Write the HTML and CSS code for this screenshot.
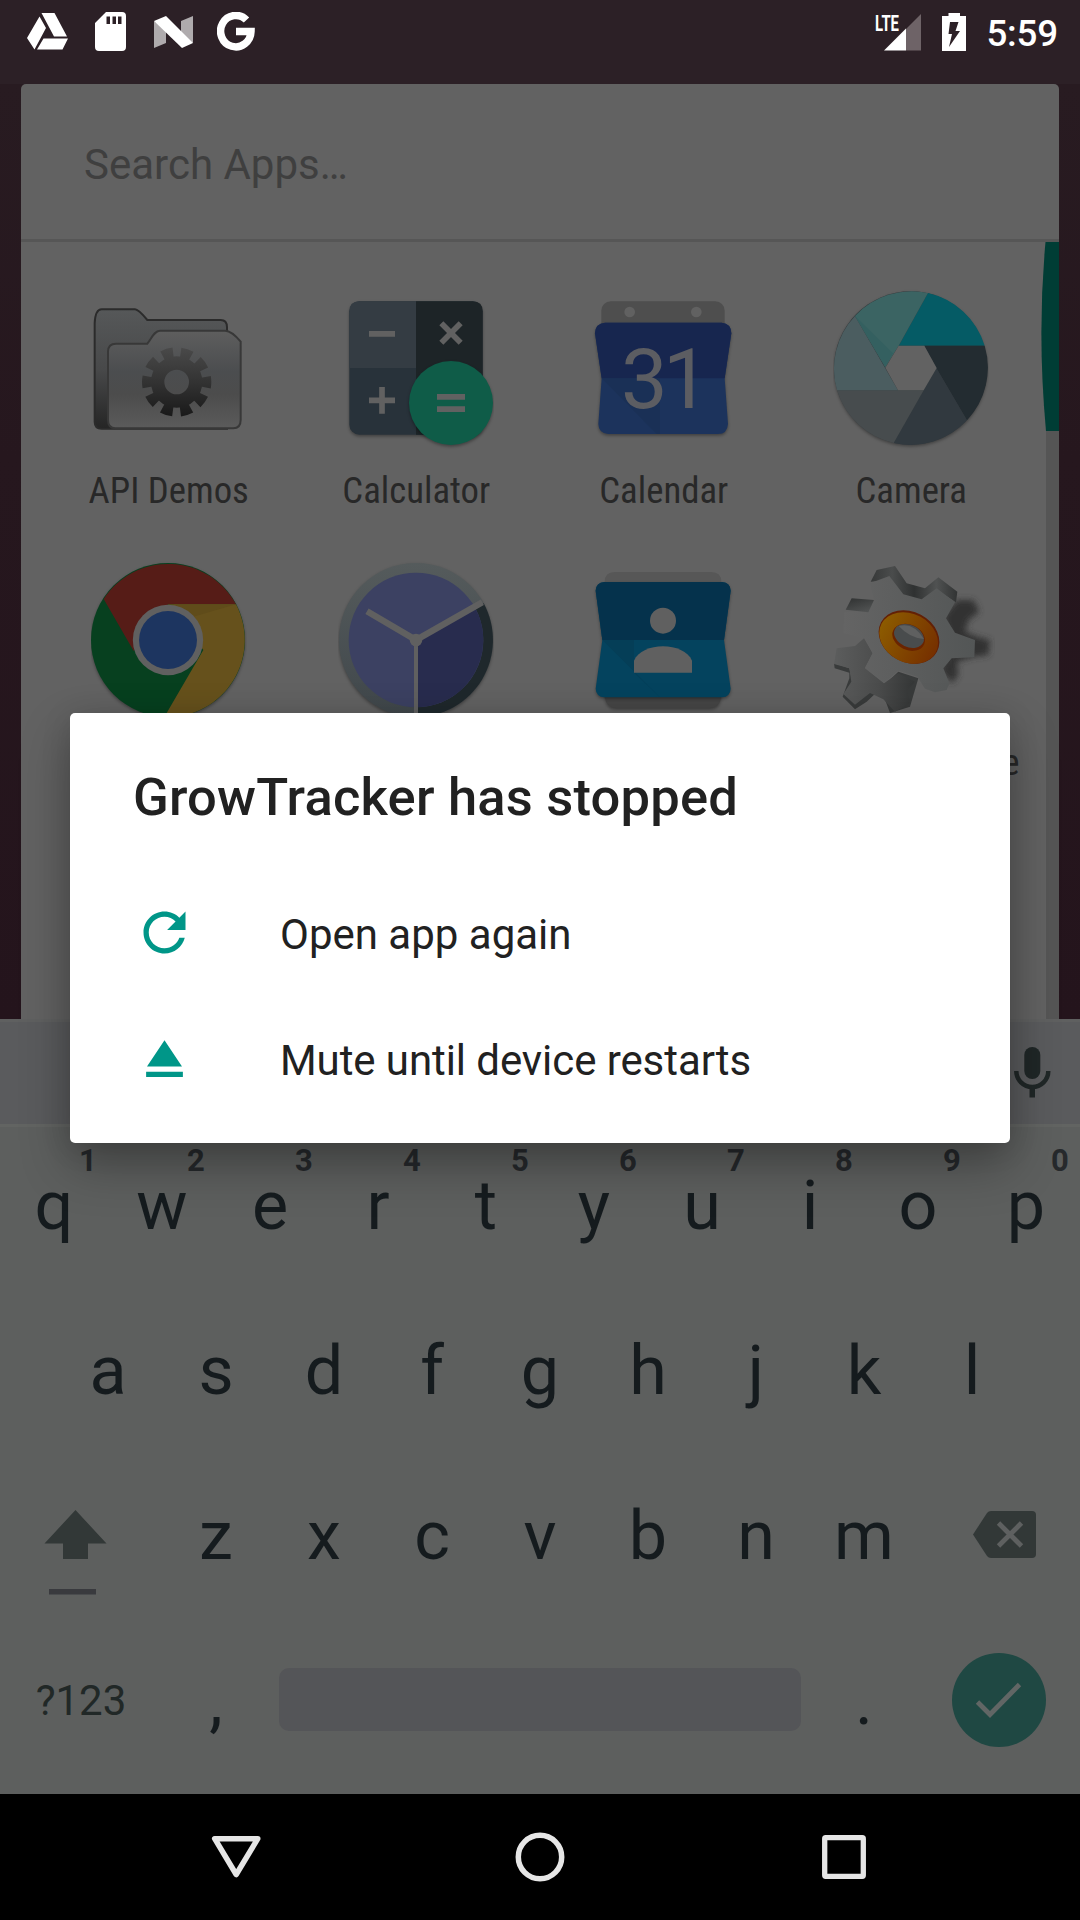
FILE: index.html
```
<!DOCTYPE html>
<html lang="en">
<head>
<meta charset="utf-8">
<title>GrowTracker has stopped</title>
<link rel="stylesheet" href="styles.css">
</head>
<body>
<div class="screen">
  <header class="status">
    <div class="status-left">
      <svg width="42" height="38" viewBox="0 0 42 38" fill="#fff"><path d="M14.500 0H27.500L40 23.500H27ZM12.500 3.500L19 15L7.500 36.500L0 25ZM16.500 25.500H41L35.500 36.500H10Z"/></svg>
      <svg width="31" height="39" viewBox="0 0 31 39"><path fill="#fff" fill-rule="evenodd" d="M11 0H27Q31 0 31 4V35Q31 39 27 39H4Q0 39 0 35V11ZM11.500 4.500V12H15V4.500ZM17.500 4.500V12H21V4.500ZM23 4.500V12H26.500V4.500Z"/></svg>
      <svg width="39" height="32" viewBox="0 0 39 32"><path fill="#afabad" d="M0 5L12 13V27L0 32ZM27 5L39 0V27L27 20Z"/><path fill="#fff" d="M0 5L12 0L39 27L28 32Z"/></svg>
      <svg width="38" height="39" viewBox="0 0 38 39"><path fill="none" stroke="#fff" stroke-width="7.500" d="M29.500 8A15.200 15.700 0 1 0 34 19.500H19"/></svg>
    </div>
    <div class="status-right">
      <svg class="signal" width="48" height="44" viewBox="-1 -5 48 44"><path fill="#6e6367" d="M46 1V37.500H31V16Z"/><path fill="#fff" d="M9 37.500L31 15.500V37.500Z"/><text class="lte" x="0" y="17.500" textLength="24" lengthAdjust="spacingAndGlyphs">LTE</text></svg>
      <svg width="24" height="38" viewBox="0 0 24 38"><path fill="#fff" fill-rule="evenodd" d="M6.500 0H18V3H24V38H0V3H6.500ZM8 9L6.500 21H10L7 34L18 18H13.500L16.500 9Z"/></svg>
      <span class="clock">5:59</span>
    </div>
  </header>

  <main class="home">
    <section class="drawer">
      <div class="search">Search Apps…</div>
      <div class="apps">
        <div class="app">
          <svg class="icon" viewBox="93 30 468 510">
            <defs>
              <linearGradient id="f1" x2="0" y2="1"><stop offset="0" stop-color="#565859"/><stop offset=".5" stop-color="#48494a"/><stop offset="1" stop-color="#252525"/></linearGradient>
              <linearGradient id="f2" x2="0" y2="1"><stop offset="0" stop-color="#5e5e5e"/><stop offset=".42" stop-color="#4b4d4f"/><stop offset=".65" stop-color="#4c4c4c"/><stop offset="1" stop-color="#5b5b5b"/></linearGradient>
              <linearGradient id="f3" gradientUnits="userSpaceOnUse" x1="0" y1="230" x2="0" y2="440"><stop offset="0" stop-color="#4a4a4a"/><stop offset=".5" stop-color="#333"/><stop offset="1" stop-color="#191919"/></linearGradient>
            </defs>
            <path fill="url(#f1)" stroke="#2b2b2b" stroke-width="6" d="M104 160Q106 118 125 118H225Q235 118 262 150H482Q501 150 501 172V476H125Q104 476 104 455Z"/>
            <path fill="url(#f2)" stroke="#383838" stroke-width="6" d="M144 245Q144 221 168 221H262C275 205 282 182 300 182H495Q515 182 542 215V450Q542 475 520 475H166Q144 475 144 450Z"/>
            <circle cx="350" cy="336" r="57" fill="none" stroke="url(#f3)" stroke-width="40"/>
            <circle cx="350" cy="336" r="89" fill="none" stroke="url(#f3)" stroke-width="30" stroke-dasharray="33 22.920" stroke-dashoffset="16.500"/>
          </svg>
          <span class="label">API Demos</span>
        </div>
        <div class="app">
          <svg class="icon" viewBox="834 30 468 510">
            <rect class="cast" x="868" y="94" width="400" height="400" rx="30" fill="#28323a"/>
            <path fill="#343c43" d="M868 294V124Q868 94 898 94H1068V294Z"/>
            <path fill="#1d2427" d="M1068 94H1238Q1268 94 1268 124V464Q1268 494 1238 494H1068Z"/>
            <path fill="none" stroke="#616161" stroke-width="17" d="M927 191.500H1005M927 391H1005M966 351V431M1144 160L1202 218M1202 160L1144 218"/>
            <circle class="cast" cx="1173" cy="399" r="126" fill="#0f5c48"/>
            <path stroke="#616161" stroke-width="17" d="M1131 380.500H1215M1131 417.500H1215"/>
          </svg>
          <span class="label">Calculator</span>
        </div>
        <div class="app">
          <svg class="icon" viewBox="78 30 468 510">
            <rect x="124" y="94" width="370" height="100" rx="28" fill="#4e4e4e"/>
            <circle cx="209" cy="126" r="16" fill="#616161"/><circle cx="409" cy="126" r="16" fill="#616161"/>
            <path class="cast" fill="#1c335c" d="M135 158H485Q513 160 514 190L494 325L504 462Q502 492 474 492H144Q116 490 115 462L125 325L105 190Q106 160 135 158Z"/>
            <path fill="#17264f" d="M135 158H485Q513 160 514 190L494 325H125L105 190Q106 160 135 158Z"/>
            <path fill="#192e52" opacity=".6" d="M125 325H300V492H290Z"/>
            <text class="day" x="309" y="414">31</text>
          </svg>
          <span class="label">Calendar</span>
        </div>
        <div class="app">
          <svg class="icon" viewBox="820 30 468 510">
            <circle class="cast" cx="1053" cy="294" r="230" fill="#33393c"/>
            <path fill="#055b65" d="M1105 69A231 231 0 0 1 1275 227H1017Z"/>
            <path fill="#232c31" d="M1275 227A231 231 0 0 1 1222 451L1130 294L1094 227Z"/>
            <path fill="#31393f" d="M1222 451A231 231 0 0 1 1002 519L1092 361L1130 294Z"/>
            <path fill="#474c4e" d="M1002 519A231 231 0 0 1 832 361H1092Z"/>
            <path fill="#4b5d60" d="M832 361A231 231 0 0 1 886 138L1015 361Z"/>
            <path fill="#3b6463" d="M886 138A231 231 0 0 1 1105 69L1017 227L977 292Z"/>
            <path fill="#346060" d="M886 138L977 292L1000 250Z"/>
            <path fill="#626262" d="M1017 227H1094L1131 294L1092 361H1015L977 293Z"/>
          </svg>
          <span class="label">Camera</span>
        </div>
        <div class="app">
          <svg class="icon" viewBox="93 36 468 510">
            <circle class="cast" cx="324" cy="300" r="231" fill="#07401f"/>
            <path fill="#561c17" d="M131 177A231 231 0 0 1 528 193H324L221 333Z"/>
            <path fill="#66511c" d="M528 193A231 231 0 0 1 320 531V519L430 330L324 193Z"/>
            <path fill="#604c1a" d="M340 193H528L400 230Z"/>
            <circle cx="324" cy="300" r="105.500" fill="#606060"/><circle cx="324" cy="300" r="87" fill="#1d3560"/>
          </svg>
        </div>
        <div class="app">
          <svg class="icon" viewBox="834 36 468 510">
            <defs><linearGradient id="k" x2="0" y2="1"><stop offset="0" stop-color="#555b5c"/><stop offset="1" stop-color="#40474b"/></linearGradient></defs>
            <circle class="cast" cx="1068" cy="300" r="231" fill="url(#k)"/>
            <path fill="#1f282c" d="M1068 300L1271 190A231 231 0 0 1 1068 531Z"/>
            <circle cx="1068" cy="300" r="202" fill="#3c4162"/>
            <path fill="#282c4e" d="M1068 300L1245 203A202 202 0 0 1 1068 502Z"/>
            <path fill="none" stroke="#606060" stroke-width="19" d="M921 214L1068 300L1267 187"/>
            <path stroke="#606060" stroke-width="12" d="M1068 300V531"/><circle cx="1068" cy="300" r="19" fill="#606060"/>
          </svg>
        </div>
        <div class="app">
          <svg class="icon" viewBox="78 36 468 510">
            <path fill="#575757" d="M134 300V126Q134 96 164 96H454Q484 96 484 126V300Z"/>
            <path class="cast" fill="#464646" d="M134 300V470Q140 504 168 504H450Q478 504 484 470V300Z"/>
            <path class="cast" fill="#04435e" d="M133 126H486Q511 128 512 152L492 300L512 446Q511 470 486 472H133Q108 470 107 446L127 300L107 152Q108 128 133 126Z"/>
            <path fill="#05324c" d="M133 126H486Q511 128 512 152L492 300H127L107 152Q108 128 133 126Z"/>
            <path fill="#053e57" d="M127 300H222V398L300 472Z"/>
            <circle cx="309" cy="242" r="39" fill="#606060"/>
            <path fill="#606060" d="M222 398V362C245 304 373 304 396 362V398Z"/>
          </svg>
        </div>
        <div class="app">
          <svg class="icon wide" viewBox="819 36 486 510">
            <defs>
              <filter id="b" x="-30%" y="-30%" width="160%" height="160%"><feGaussianBlur stdDeviation="9"/></filter>
              <linearGradient id="g1"><stop offset="0" stop-color="#646464"/><stop offset="1" stop-color="#535656"/></linearGradient>
              <linearGradient id="g2"><stop offset="0" stop-color="#5c5d5d"/><stop offset=".55" stop-color="#4b4c4c"/><stop offset="1" stop-color="#343636"/></linearGradient>
              <linearGradient id="g3"><stop offset="0" stop-color="#8c5b00"/><stop offset="1" stop-color="#763000"/></linearGradient>
              <linearGradient id="g4" gradientUnits="userSpaceOnUse" x1="930" y1="0" x2="1195" y2="0"><stop offset="0" stop-color="#363838"/><stop offset=".25" stop-color="#4a4c4c"/><stop offset=".5" stop-color="#2f3131"/><stop offset=".75" stop-color="#505252"/><stop offset="1" stop-color="#303232"/></linearGradient>
              <linearGradient id="g5" x2=".6" y2="1"><stop offset="0" stop-color="#2f3131"/><stop offset="1" stop-color="#505252"/></linearGradient>
            </defs>
            <path filter="url(#b)" fill="#303030" d="M1150 230L1190 180L1240 180L1258 215L1225 240L1215 275L1250 290L1290 300L1285 345L1240 350L1190 365L1195 405L1175 430L1140 390L1180 320Z"/>
            <path fill="#393b3b" d="M822 370L868 385L880 440L930 458L970 465L990 519L1050 500L1075 415L1015 395L920 485L885 508L848 470L868 415V398L824 385Z"/>
            <path fill="url(#g2)" d="M822 372L830 325L885 318L912 295L938 340L915 385L972 430L1015 400L1065 425L1042 450L1050 488L1005 515L970 478L930 459L885 494L850 462L874 425L868 385Z"/>
            <path fill="url(#g4)" d="M932 125L950 90L1005 78L1040 130L1095 145L1135 112L1192 155L1188 187L1130 150L1085 182L1030 170L990 120Z"/>
            <path fill="url(#g1)" d="M930 130L988 108L1030 163L1085 178L1130 145L1185 187L1158 235L1185 278L1245 300L1243 352L1175 355L1150 385L1168 430L1160 450L1125 457L1095 446L1072 410L1015 392L972 428L915 383L938 340L915 295L850 280L853 215L925 215L942 180Z"/>
            <path fill="url(#g5)" d="M857 209L875 175L942 180L925 217Z"/>
            <ellipse cx="1047" cy="291" rx="95" ry="76" transform="rotate(28 1047 291)" fill="#632005"/>
            <ellipse cx="1046" cy="294" rx="92" ry="73" transform="rotate(28 1046 294)" fill="url(#g3)"/>
            <ellipse cx="1046" cy="292" rx="51" ry="38" transform="rotate(25 1046 292)" fill="#6a2400"/>
            <ellipse cx="1047" cy="288" rx="47" ry="33" transform="rotate(25 1047 288)" fill="#494c4d"/>
            <path fill="#5f6060" d="M1016 258Q1060 245 1092 297Q1050 295 1016 258Z"/>
          </svg>
          <span class="label">Custom Locale</span>
        </div>
      </div>
      <div class="track"></div>
      <svg class="thumb" width="18" height="189" viewBox="0 0 18 189"><path fill="#003d35" d="M4.500 0Q-4 92 5 189H18V0Z"/></svg>
    </section>
  </main>

  <section class="keyboard">
    <div class="strip">
      <svg width="37" height="51" viewBox="0 0 37 51"><rect x="10.300" y="0" width="16" height="32" rx="8" fill="#202727"/><path fill="none" stroke="#202727" stroke-width="4.500" d="M2.300 24A16 16 0 0 0 34.300 24"/><path fill="#202727" d="M15.500 39H21V50.500H15.500Z"/></svg>
    </div>
    <div class="keys">
      <div class="row">
        <span class="key">q<i>1</i></span><span class="key">w<i>2</i></span><span class="key">e<i>3</i></span><span class="key">r<i>4</i></span><span class="key">t<i>5</i></span><span class="key">y<i>6</i></span><span class="key">u<i>7</i></span><span class="key">i<i>8</i></span><span class="key">o<i>9</i></span><span class="key">p<i>0</i></span>
      </div>
      <div class="row">
        <span class="key">a</span><span class="key">s</span><span class="key">d</span><span class="key">f</span><span class="key">g</span><span class="key">h</span><span class="key">j</span><span class="key">k</span><span class="key">l</span>
      </div>
      <div class="row">
        <span class="side"><svg width="162" height="165" viewBox="0 2 162 165"><path fill="#323837" d="M75.500 55L106.500 88.500H88V104H63V88.500H44.500Z"/><path fill="#393a3e" d="M49 134H96V139.500H49Z"/></svg></span>
        <span class="key">z</span><span class="key">x</span><span class="key">c</span><span class="key">v</span><span class="key">b</span><span class="key">n</span><span class="key">m</span>
        <span class="side"><svg width="162" height="165" viewBox="918 2 162 165"><path fill="#323837" d="M973 79.500L987 58Q988.500 56 991 56H1032Q1036 56 1036 60V99Q1036 103 1032 103H991Q988.500 103 987 101Z"/><path stroke="#5e6060" stroke-width="4.800" d="M998.500 68L1021.500 91M1021.500 68L998.500 91"/></svg></span>
      </div>
      <div class="row">
        <span class="side sym">?123</span>
        <span class="key">,</span>
        <span class="space"></span>
        <span class="key">.</span>
        <span class="side"><svg width="162" height="165" viewBox="918 2 162 165"><circle cx="999" cy="80" r="47" fill="#1f4843"/><path fill="none" stroke="#616665" stroke-width="4.800" d="M977.500 82L990 94.500L1019.500 64.500"/></svg></span>
      </div>
    </div>
  </section>

  <nav class="nav">
    <svg width="50" height="50" viewBox="0 0 50 50"><path fill="none" stroke="#e6e6e6" stroke-width="5.500" stroke-linejoin="round" d="M3.700 6.700H46.800L25.200 42.500Z"/></svg>
    <svg width="50" height="50" viewBox="0 0 50 50"><circle cx="25" cy="25" r="21.700" fill="none" stroke="#e6e6e6" stroke-width="5.500"/></svg>
    <svg width="50" height="50" viewBox="0 0 50 50"><rect x="5.700" y="5.700" width="38.600" height="38.600" rx="1" fill="none" stroke="#e6e6e6" stroke-width="5.300" stroke-linejoin="round"/></svg>
  </nav>

  <div class="dialog" role="dialog">
    <h1 class="title">GrowTracker has stopped</h1>
    <div class="action">
      <svg width="63" height="63" viewBox="0 0 24 24"><path fill="#009688" d="M17.650 6.350C16.200 4.900 14.210 4 12 4c-4.420 0-7.990 3.580-7.990 8s3.570 8 7.990 8c3.730 0 6.840-2.550 7.730-6h-2.080c-.820 2.330-3.040 4-5.650 4-3.310 0-6-2.690-6-6s2.690-6 6-6c1.660 0 3.140.690 4.220 1.780L13 11h7V4l-2.350 2.350z"/></svg>
      <span>Open app again</span>
    </div>
    <div class="action mute">
      <svg width="63" height="63" viewBox="0 0 24 24"><path fill="#009688" d="M5 17h14v2H5zm7-12L5.330 15h13.340z"/></svg>
      <span>Mute until device restarts</span>
    </div>
  </div>
</div>
</body>
</html>
```
FILE: styles.css
```
* { box-sizing: border-box; }
body { margin: 0; background: #000; font-family: Roboto, "Noto Sans", sans-serif; }
svg { display: block; flex: none; }

.screen {
  position: relative;
  width: 1080px;
  height: 1920px;
  overflow: hidden;
  display: flex;
  flex-direction: column;
}

/* status bar */
.status {
  height: 84px;
  padding: 12px 22px 0 27px;
  display: flex;
  justify-content: space-between;
  background: #2c2026;
}
.status-left, .status-right { display: flex; height: 39px; align-items: center; }
.status-left { gap: 27px; }
.status-left svg:nth-child(2) { margin-left: -1px; margin-right: 1px; }
.status-left svg:nth-child(4) { margin-left: -3px; }
.status-right { gap: 20px; }
.signal { margin-top: -4px; }
.lte { font: 700 22.500px Roboto, sans-serif; fill: #fff; }
.clock { font-size: 36.750px; font-weight: 500; line-height: 43px; letter-spacing: -.2px; color: #fff; margin-top: 3px; }

/* app drawer */
.home {
  height: 935px;
  padding: 0 21px;
  overflow: hidden;
  background: linear-gradient(#281b21, #26171e 40%, #24141c);
}
.drawer {
  position: relative;
  height: 935px;
  overflow: hidden;
  border-radius: 5px 5px 0 0;
  background: #626262;
}
.search {
  height: 158px;
  padding: 45px 0 0 63px;
  border-bottom: 3px solid #565656;
  font-size: 42px;
  line-height: 72px;
  color: #3f3f3f;
}
.apps {
  display: grid;
  grid-template-columns: repeat(4, 247.500px);
  grid-auto-rows: 272px;
  padding: 38px 0 0 24px;
}
.app { display: flex; flex-direction: column; align-items: center; }
.icon { width: 156px; height: 170px; }
.icon.wide { width: 162px; margin-left: 6px; }
.cast { filter: drop-shadow(0 5px 5px rgba(0, 0, 0, .35)); }
.day { font: 400 249px Roboto, sans-serif; fill: #5c5d62; text-anchor: middle; letter-spacing: -14px; }
.label {
  margin-top: 19px;
  font-family: "Roboto Condensed", Roboto, sans-serif;
  font-stretch: 75%;
  font-size: 36.750px;
  line-height: 44px;
  white-space: nowrap;
  color: #282828;
}
.track { position: absolute; right: 0; top: 158px; width: 13px; height: 777px; background: #555; }
.thumb { position: absolute; right: 0; top: 158px; }

/* keyboard */
.keyboard { height: 775px; background: #5d5f5e; color: #151b1e; }
.strip {
  height: 108px;
  padding: 0 29px 2px 0;
  display: flex;
  justify-content: flex-end;
  align-items: center;
  background: #5a5b5d;
  border-top: 3px solid #5f6060;
  border-bottom: 3px solid #626462;
}
.row { display: flex; justify-content: center; height: 165px; }
.key {
  position: relative;
  width: 108px;
  padding-top: 39px;
  text-align: center;
  font-size: 68.250px;
  line-height: 80px;
}
.key i {
  position: absolute;
  left: 58px;
  top: 12px;
  width: 60px;
  font-size: 31px;
  font-style: normal;
  font-weight: 700;
  line-height: 44px;
  color: #26292c;
}
.side { width: 162px; }
.sym { padding: 49px 0 0 0; text-align: center; font-size: 42px; line-height: 60px; color: #212827; }
.space { width: 522px; height: 63px; margin: 46px 9px 0; border-radius: 10px; background: #545558; }

/* navigation bar */
.nav {
  height: 126px;
  background: #000;
  display: flex;
  justify-content: center;
  align-items: center;
  gap: 254px;
}

/* crash dialog */
.dialog {
  position: absolute;
  left: 70px;
  top: 713px;
  width: 940px;
  height: 430px;
  padding: 53px 63px 0;
  border-radius: 5px;
  background: #fff;
  box-shadow: 0 22px 50px rgba(0, 0, 0, .3), 0 4px 30px rgba(0, 0, 0, .12);
  color: #212121;
}
.title { margin: 0 0 41px; font-size: 52.500px; font-weight: 500; line-height: 62px; letter-spacing: .2px; }
.action { height: 126px; display: flex; align-items: center; gap: 84px; font-size: 42px; }
.action span { padding-top: 4px; }
.mute span { letter-spacing: -.08px; }
```
